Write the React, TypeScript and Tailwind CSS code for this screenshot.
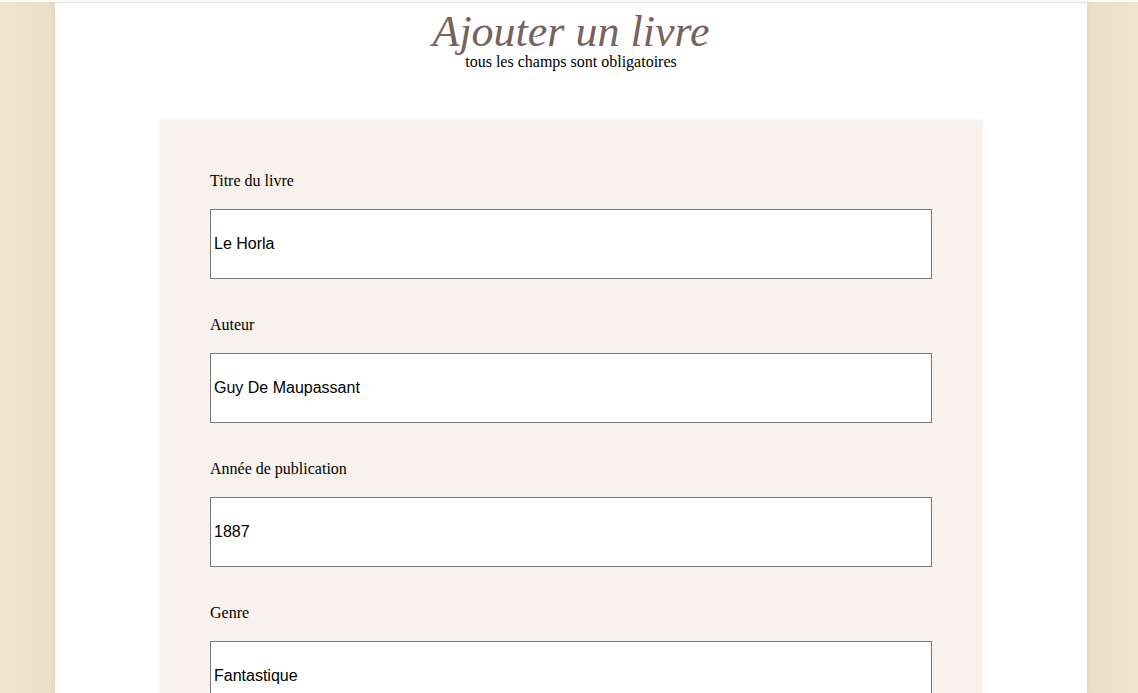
import React from "react";

const fields = [
  { label: "Titre du livre", value: "Le Horla" },
  { label: "Auteur", value: "Guy De Maupassant" },
  { label: "Année de publication", value: "1887" },
  { label: "Genre", value: "Fantastique" },
];

export default function App() {
  return (
    <div className="w-full h-[693px] overflow-hidden bg-white pt-[2px]">
      <div className="flex h-full bg-[linear-gradient(90deg,#f1e5d0_0%,#ecdec6_4.8%,#ecdec6_95.5%,#f0e4cf_100%)] pl-[55px]">
        <div className="w-[1032px] h-full bg-white border-t border-[#e6e6e6] shadow-[0_0_6px_rgba(120,90,50,0.12)] flex flex-col items-center">
          <h1
            className="italic text-[44px] leading-[40px] text-[#74635e] mt-[9px]"
            style={{ fontFamily: '"Liberation Serif", "Times New Roman", serif' }}
          >
            Ajouter un livre
          </h1>
          <p
            className="text-[16px] leading-[18px] text-black mt-[1px]"
            style={{ fontFamily: '"Liberation Serif", "Times New Roman", serif' }}
          >
            tous les champs sont obligatoires
          </p>
          <form className="mt-[49px] w-[822px] bg-[#f7f2ed] shadow-[0_0_4px_rgba(200,180,160,0.25)] px-[50px] pt-[49px] flex flex-col gap-[34px] pb-10">
            {fields.map((f) => (
              <div key={f.label} className="flex flex-col gap-[16px]">
                <label
                  className="text-[16px] leading-[24px] text-black"
                  style={{ fontFamily: '"Liberation Serif", "Times New Roman", serif' }}
                >
                  {f.label}
                </label>
                <input
                  readOnly
                  value={f.value}
                  className="h-[70px] w-full bg-white border border-[#767676] px-[3px] text-[16px] text-black outline-none"
                  style={{ fontFamily: '"Liberation Sans", Arial, sans-serif' }}
                />
              </div>
            ))}
          </form>
        </div>
      </div>
    </div>
  );
}
